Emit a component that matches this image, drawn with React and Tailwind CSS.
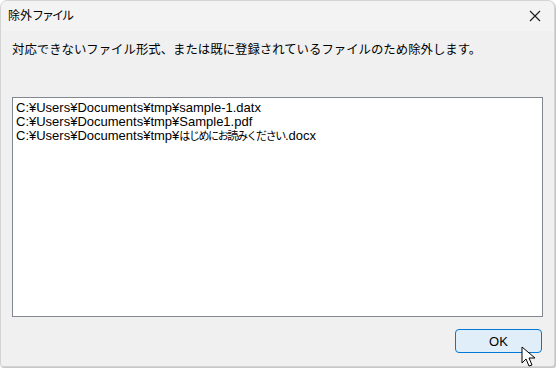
import React from "react";

export default function App() {
  const jp = { fontFamily: '"Liberation Sans", "Noto Sans CJK JP", sans-serif' };
  return (
    <div className="w-[556px] h-[368px] bg-white relative overflow-hidden">
      <div
        className="w-[555px] h-[367px] bg-[#f0f0f0] border border-[#d4d4d4] rounded-t-[7px] rounded-b-[3px] flex flex-col text-[12px] text-black shadow-[1px_1px_1px_rgba(0,0,0,0.25)]"
        style={jp}
      >
        <div className="h-[30px] bg-[#f3f3f3] rounded-t-[7px] flex items-center justify-between pl-[7px] pr-[12px] shrink-0">
          <span className="leading-none">
            除外<span className="tracking-[-2px]">ファイル</span>
          </span>
          <svg width="12" height="12" viewBox="0 0 12 12" className="mr-[1px]">
            <path d="M1 1 L11 11 M11 1 L1 11" stroke="#1a1a1a" strokeWidth="1.1" fill="none" />
          </svg>
        </div>
        <div className="pl-[11px] pt-[11px] leading-[16px] text-[12.4px]">
          対応できないファイル形式、または既に登録されているファイルのため除外します。
        </div>
        <div className="mx-[11px] mt-[39px] h-[220px] bg-white border border-[#828790] pl-[3px] pt-[3px] leading-[14px] text-[13px]">
          <div>C:¥Users¥Documents¥tmp¥sample-1.datx</div>
          <div>C:¥Users¥Documents¥tmp¥Sample1.pdf</div>
          <div>
            C:¥Users¥Documents¥tmp¥<span className="text-[11px] tracking-[-1.4px]">はじめにお読みください</span>.docx
          </div>
        </div>
        <div className="flex justify-end pr-[12px] mt-[12px]">
          <button className="w-[87px] h-[24px] bg-[#e0eef9] border border-[#0078d4] rounded-[4px] text-[13px] leading-none" style={{ fontFamily: '"Liberation Sans", sans-serif' }}>
            OK
          </button>
        </div>
      </div>
      <svg className="absolute left-[521px] top-[346px]" width="18" height="22" viewBox="0 0 18 22">
        <path d="M1 1 L1 17 L5 13 L8 20 L11 19 L8 12 L14 12 Z" fill="#fff" stroke="#000" strokeWidth="1" strokeLinejoin="round" />
      </svg>
    </div>
  );
}
